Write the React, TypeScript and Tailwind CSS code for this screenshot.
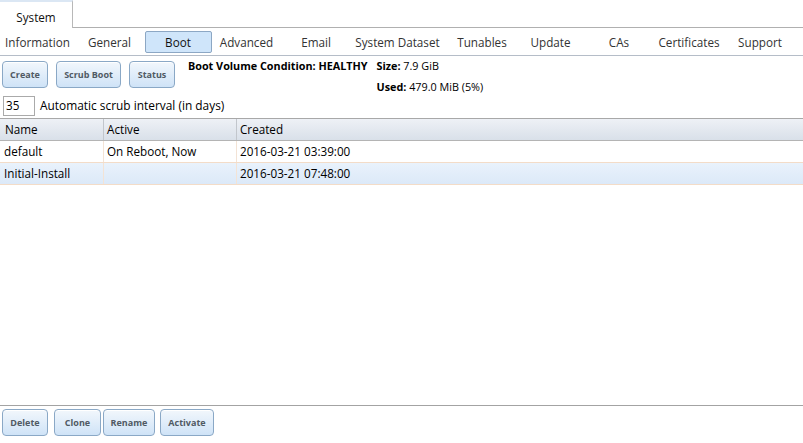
import React from 'react';

const tabs: [string, number][] = [
  ['Information', 75],
  ['General', 69],
  ['Boot', 68],
  ['Advanced', 69],
  ['Email', 70],
  ['System Dataset', 93],
  ['Tunables', 76],
  ['Update', 61],
  ['CAs', 76],
  ['Certificates', 64],
  ['Support', 78],
];

const rows = [
  { name: 'default', active: 'On Reboot, Now', created: '2016-03-21 03:39:00' },
  { name: 'Initial-Install', active: '', created: '2016-03-21 07:48:00' },
];

function Btn({ label, w }: { label: string; w: string }) {
  return (
    <button
      className={`${w} h-[27px] shrink-0 rounded-[4px] border border-[#8aa8c6] bg-gradient-to-b from-[#f2f7fc] to-[#cfe3f7] text-[9px] font-bold text-[#505a64] shadow-[inset_0_1px_0_#ffffff]`}
    >
      {label}
    </button>
  );
}

export default function App() {
  return (
    <div
      className="w-[803px] h-[443px] bg-white flex flex-col overflow-hidden text-[11.7px] text-black"
      style={{ fontFamily: '"Open Sans", sans-serif' }}
    >
      {/* Top tab bar */}
      <div className="flex h-[28px] shrink-0">
        <div className="w-[73px] border-r border-[#b8b8b8] border-t-[2px] border-t-[#dbe7f4] bg-white flex items-center justify-center pt-[5px] text-[#111]">
          System
        </div>
        <div className="flex-1 border-b border-[#b0b0b0]" />
      </div>

      {/* Sub tabs */}
      <div className="flex h-[28px] shrink-0 border-b border-[#b5bdc8] items-center">
        {tabs.map(([t, w]) => (
          <div key={t} style={{ width: w }} className="flex justify-center shrink-0 whitespace-nowrap">
            {t === 'Boot' ? (
              <div className="w-[67px] h-[22px] mt-[1px] flex items-center justify-center pt-[1px] rounded-[2px] border border-[#8ca7c4] bg-[#cfe5fa] text-[#111]">
                Boot
              </div>
            ) : (
              <span className="text-[#333] mt-[3px]">{t}</span>
            )}
          </div>
        ))}
      </div>

      {/* Toolbar */}
      <div className="flex pt-[5px] pl-[2px] shrink-0">
        <div className="flex gap-[8px]">
          <Btn label="Create" w="w-[46px]" />
          <Btn label="Scrub Boot" w="w-[65px]" />
          <Btn label="Status" w="w-[46px]" />
        </div>
        <div className="ml-[13px] -mt-[2px] text-[10.8px] font-bold leading-[14px] whitespace-nowrap">
          Boot Volume Condition: HEALTHY
        </div>
        <div className="ml-[9px] -mt-[2px] flex flex-col gap-[7px] text-[10.8px] leading-[14px] whitespace-nowrap">
          <div>
            <span className="font-bold">Size:</span> 7.9 GiB
          </div>
          <div>
            <span className="font-bold">Used:</span> 479.0 MiB (5%)
          </div>
        </div>
      </div>

      <div className="flex items-center gap-[5px] pl-[3px] mt-[2px] shrink-0">
        <div className="w-[32px] h-[20px] border border-[#aaaaaa] flex items-center pl-[2px]">35</div>
        <span className="text-[11.9px]">Automatic scrub interval (in days)</span>
      </div>

      {/* Table */}
      <div className="flex-1 mt-[2px] border-t border-[#a8a8a8] flex flex-col">
        <div className="flex h-[22px] shrink-0 bg-gradient-to-b from-[#eef1f6] to-[#d9e0e9] border-b border-[#b4b4b4]">
          <div className="w-[104px] pl-[5px] flex items-center border-r border-[#c2c6cc]">Name</div>
          <div className="w-[133px] pl-[3px] flex items-center border-r border-[#c2c6cc]">Active</div>
          <div className="flex-1 pl-[3px] flex items-center">Created</div>
        </div>
        {rows.map((r, i) => (
          <div
            key={r.name}
            className={`flex h-[22px] shrink-0 border-b border-[#f3dcc8] ${i === 1 ? 'bg-gradient-to-b from-[#e9f2fc] to-[#dce9f8]' : 'bg-white'}`}
          >
            <div className="w-[104px] pl-[4px] flex items-center border-r border-[#f3e3d5]">{r.name}</div>
            <div className="w-[133px] pl-[3px] flex items-center border-r border-[#f3e3d5]">{r.active}</div>
            <div className="flex-1 pl-[3px] flex items-center">{r.created}</div>
          </div>
        ))}
      </div>

      {/* Bottom */}
      <div className="h-[38px] shrink-0 border-t border-[#a3a3a3] flex pl-[2px] pt-[3px]">
        <Btn label="Delete" w="w-[46px]" />
        <div className="ml-[6px]">
          <Btn label="Clone" w="w-[47px]" />
        </div>
        <div className="ml-[2px]">
          <Btn label="Rename" w="w-[52px]" />
        </div>
        <div className="ml-[5px]">
          <Btn label="Activate" w="w-[54px]" />
        </div>
      </div>
    </div>
  );
}
